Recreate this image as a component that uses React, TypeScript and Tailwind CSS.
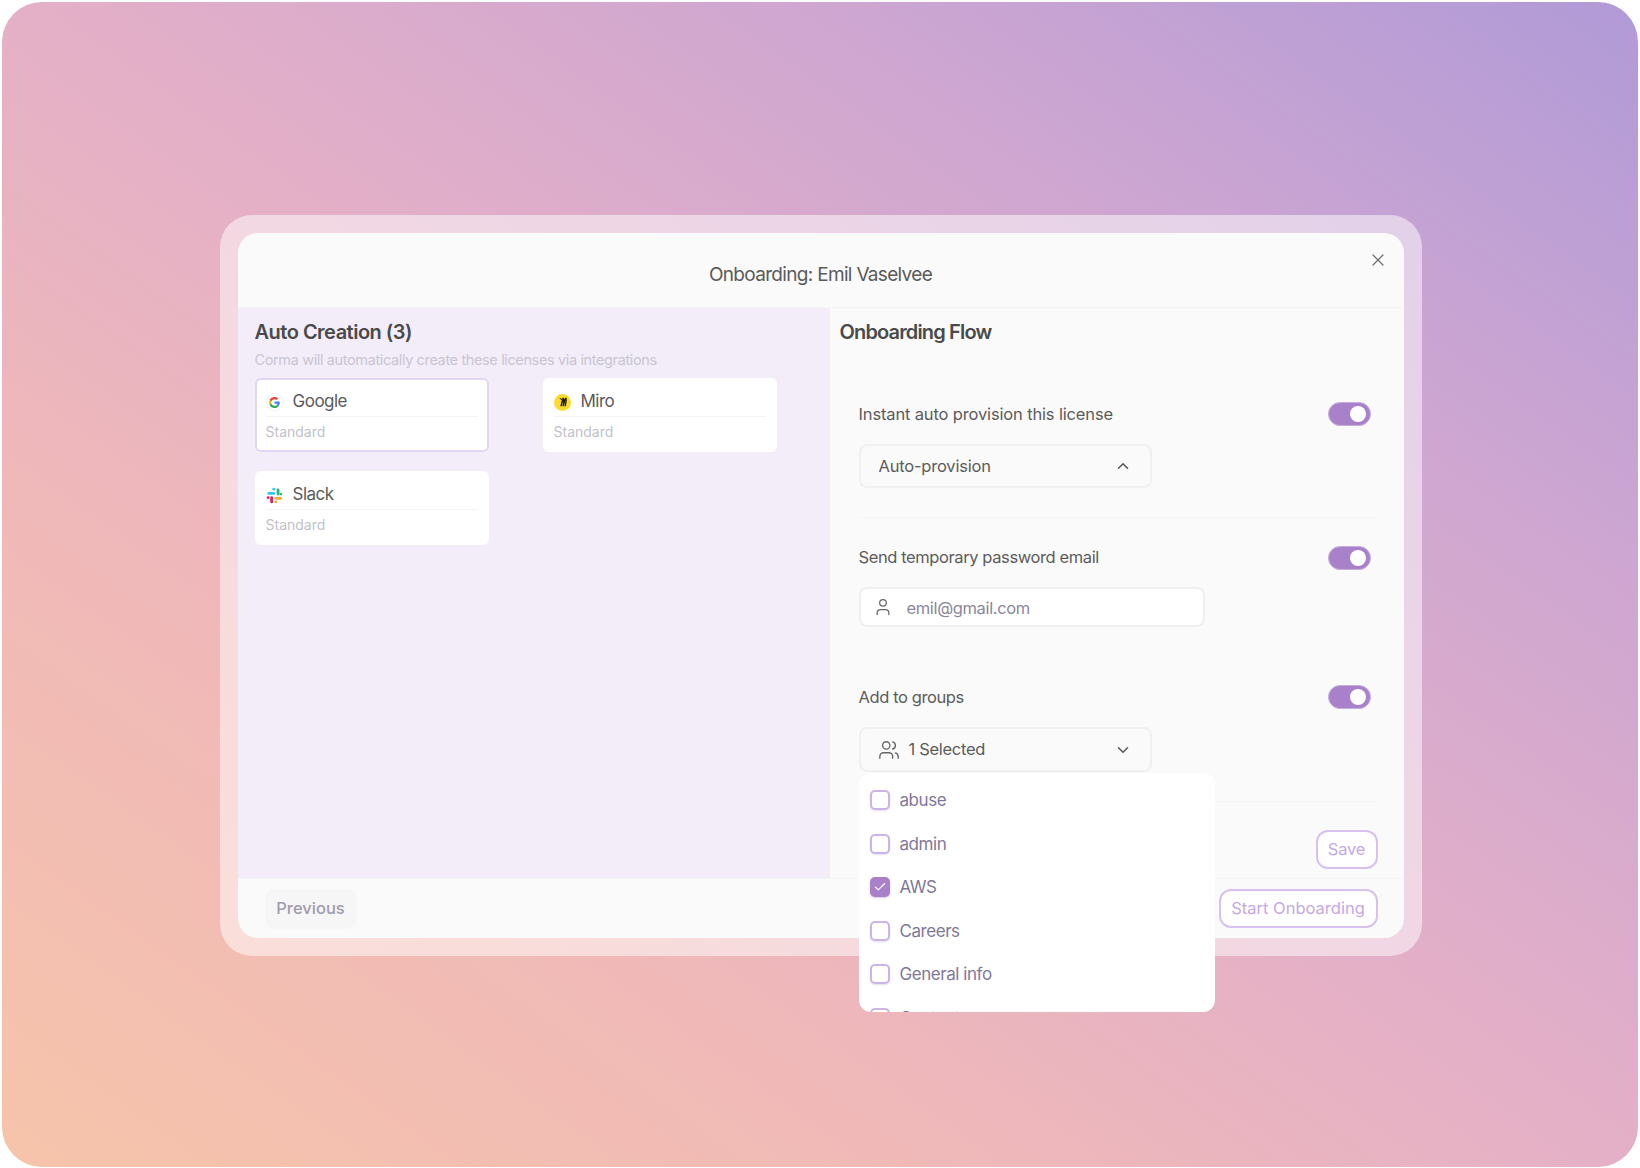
import { Check, ChevronDown, ChevronUp, User, Users, X } from "lucide-react";

function Toggle() {
  return (
    <div className="flex h-[24px] w-[43px] items-center justify-end rounded-full border border-[#c4aede] bg-[#a981cb] pr-[4px]">
      <div className="h-[16px] w-[16px] rounded-full bg-white" />
    </div>
  );
}

function GoogleLogo() {
  return (
    <div className="flex h-[18px] w-[18px] items-center justify-center rounded-full border border-[#f1f1f1] bg-white">
      <svg viewBox="0 0 48 48" className="h-[11px] w-[11px]">
        <path fill="#EA4335" d="M24 9.5c3.5 0 6.7 1.2 9.2 3.6l6.9-6.9C35.9 2.4 30.5 0 24 0 14.6 0 6.5 5.4 2.6 13.2l8 6.2C12.5 13.7 17.8 9.5 24 9.5z" />
        <path fill="#4285F4" d="M47 24.5c0-1.6-.1-3.1-.4-4.5H24v9h13c-.6 3-2.3 5.5-4.800 7.200l7.700 6C44.400 37.600 47 31.600 47 24.500z" />
        <path fill="#FBBC05" d="M10.600 28.600c-.5-1.400-.8-3-.8-4.600s.3-3.200.8-4.600l-8-6.200C.9 16.500 0 20.100 0 24s.9 7.500 2.600 10.800l8-6.200z" />
        <path fill="#34A853" d="M24 48c6.500 0 11.900-2.100 15.900-5.800l-7.700-6c-2.100 1.400-4.900 2.300-8.200 2.300-6.200 0-11.500-4.200-13.400-9.900l-8 6.200C6.500 42.600 14.600 48 24 48z" />
      </svg>
    </div>
  );
}

function SlackLogo() {
  return (
    <svg viewBox="0 0 24 24" className="h-[17px] w-[17px]">
      <g fill="#36C5F0">
        <rect x="9" y="1" width="4" height="4" rx="2" />
        <rect x="2" y="7" width="11" height="4" rx="2" />
      </g>
      <g fill="#2EB67D">
        <rect x="15" y="2" width="4" height="10" rx="2" />
        <rect x="19" y="8" width="4" height="4" rx="2" />
      </g>
      <g fill="#ECB22E">
        <rect x="12" y="14" width="11" height="4" rx="2" />
        <rect x="12" y="19" width="4" height="4" rx="2" />
      </g>
      <g fill="#E01E5A">
        <rect x="6" y="13" width="4" height="10" rx="2" />
        <rect x="1" y="13" width="4" height="4" rx="2" />
      </g>
    </svg>
  );
}

function MiroLogo() {
  return (
    <div className="flex h-[17px] w-[17px] items-center justify-center rounded-full bg-[#fbdc2e]">
      <svg viewBox="0 0 12 12" className="h-[10px] w-[10px]">
        <path fill="#1d1a10" d="M8.500 1H10.500L9 5 11 1v0L9.500 11H7.800L9 4.500 6.800 11H5.300L6.500 4.500 4.300 11H2.800L4.500 4 1.500 1.500H3.500L5.500 3 5 1H6.800L7.500 3z" />
      </svg>
    </div>
  );
}

function AppCard({ name, logo, selected }: { name: string; logo: React.ReactNode; selected?: boolean }) {
  return (
    <div
      className={
        selected
          ? "h-[74px] rounded-[6px] border-2 border-[#e2d7f1] bg-white px-[9px]"
          : "h-[74px] rounded-[6px] border-2 border-white bg-white px-[9px]"
      }
    >
      <div className="flex h-[37px] items-center gap-[9px] border-b border-[#f4f4f4] pt-[8px]">
        <div className="flex w-[18px] justify-center">{logo}</div>
        <span className="text-[17px] tracking-[-0.500px] text-[#5a5a5a]">{name}</span>
      </div>
      <div className="pt-[5px] text-[14px] leading-[20px] text-[#c2bfca]">Standard</div>
    </div>
  );
}

function Row({ label, tracking }: { label: string; tracking: string }) {
  return (
    <div className="flex items-center justify-between pr-[7px]">
      <span className={tracking + " text-[16.500px] text-[#5c5c5c]"}>{label}</span>
      <Toggle />
    </div>
  );
}

function GroupItem({ label, checked }: { label: string; checked?: boolean }) {
  return (
    <div className="flex h-[43.500px] shrink-0 items-center gap-[10px] pl-[11px]">
      <div
        className={
          checked
            ? "flex h-[20px] w-[20px] items-center justify-center rounded-[5px] bg-[#a981cb] shadow-[0_1px_2px_rgba(120,90,170,0.3)]"
            : "h-[20px] w-[20px] rounded-[5px] border-2 border-[#cbb5e6] bg-white shadow-[0_1px_2px_rgba(120,90,170,0.2)]"
        }
      >
        {checked && <Check className="h-[14px] w-[14px] text-white" strokeWidth={2} />}
      </div>
      <span className="pt-[2px] text-[17px] tracking-[-0.450px] text-[#7f7899]">{label}</span>
    </div>
  );
}

export default function App() {
  return (
    <div className="h-[1168px] w-full bg-white pl-[2px] pr-[2px] pt-[2px] font-['Inter',sans-serif]">
      <div className="flex h-[1165px] w-full justify-center rounded-[40px] bg-[linear-gradient(to_top_right,#f6c4aa_0%,#f0b9b8_28%,#e3afc8_52%,#cba5d2_78%,#b09ad7_100%)] pl-[1px] pt-[213px]">
        <div className="h-[741px] w-[1202px] rounded-[32px] bg-white/50 p-[18px]">
          <div className="flex h-[705px] w-[1166px] flex-col rounded-[20px] bg-[#fafafa]">
            <header className="relative flex h-[74px] shrink-0 items-center justify-center pt-[10px]">
              <h1 className="text-[19px] font-normal tracking-[-0.680px] text-[#5a5a5a]">Onboarding: Emil Vaselvee</h1>
              <X className="absolute right-[16px] top-[17px] h-[20px] w-[20px] text-[#6f6f6f]" strokeWidth={1.500} />
            </header>

            <div className="flex h-[572px] shrink-0 border-t border-b border-[#f5f5f5]">
              <section className="h-full w-[592px] shrink-0 bg-[#f3edfa] pl-[17px] pr-[53px] pt-[12px]">
                <h2 className="text-[20px] font-semibold leading-[24px] tracking-[-0.500px] text-[#4a4a4a]">Auto Creation (3)</h2>
                <p className="mb-[7px] mt-[5px] text-[14.500px] leading-[22px] tracking-[-0.370px] text-[#c9c5d2]">
                  Corma will automatically create these licenses via integrations
                </p>
                <div className="grid grid-cols-[234px_234px] gap-x-[54px] gap-y-[19px]">
                  <AppCard name="Google" logo={<GoogleLogo />} selected />
                  <AppCard name="Miro" logo={<MiroLogo />} />
                  <AppCard name="Slack" logo={<SlackLogo />} />
                </div>
              </section>

              <section className="flex-1 pl-[10px] pr-[26px] pt-[12px]">
                <h2 className="text-[20px] font-semibold leading-[24px] tracking-[-0.850px] text-[#4a4a4a]">Onboarding Flow</h2>
                <div className="ml-[19px] mt-[58px]">
                  <Row label="Instant auto provision this license" tracking="tracking-[-0.150px]" />
                  <div className="mt-[17.500px] flex h-[44px] w-[293px] items-center justify-between rounded-[8px] border-2 border-[#f0f0f0] pl-[18px] pr-[18px]">
                    <span className="text-[16.500px] tracking-[-0.200px] text-[#5c5c5c]">Auto-provision</span>
                    <ChevronUp className="h-[18px] w-[18px] text-[#555]" strokeWidth={2} />
                  </div>
                  <div className="mt-[29px] h-px bg-[#f5f5f5]" />
                  <div className="mt-[27px]">
                    <Row label="Send temporary password email" tracking="tracking-[-0.400px]" />
                  </div>
                  <div className="mt-[16.500px] flex h-[40px] w-[346px] items-center gap-[14px] rounded-[8px] border-2 border-[#efefef] bg-white pl-[12px]">
                    <User className="h-[20px] w-[20px] text-[#666]" strokeWidth={1.500} />
                    <span className="pt-[3px] text-[16.500px] tracking-[-0.350px] text-[#8b8799]">emil@gmail.com</span>
                  </div>
                  <div className="mt-[58px]">
                    <Row label="Add to groups" tracking="tracking-[-0.400px]" />
                  </div>
                  <div className="relative mt-[18px] w-[293px]">
                    <div className="flex h-[45px] items-center justify-between rounded-[8px] border-2 border-[#f0f0f0] pl-[17px] pr-[18px]">
                      <div className="flex items-center gap-[9px]">
                        <Users className="h-[22px] w-[22px] text-[#666]" strokeWidth={1.500} />
                        <span className="text-[16.500px] tracking-[-0.300px] text-[#5c5c5c]">1 Selected</span>
                      </div>
                      <ChevronDown className="h-[18px] w-[18px] text-[#555]" strokeWidth={2} />
                    </div>
                    <div className="absolute left-0 top-[46px] z-10 flex h-[238.500px] w-[356px] flex-col overflow-hidden rounded-[12px] bg-white pt-[5px]">
                      <GroupItem label="abuse" />
                      <GroupItem label="admin" />
                      <GroupItem label="AWS" checked />
                      <GroupItem label="Careers" />
                      <GroupItem label="General info" />
                      <GroupItem label="Contact" />
                    </div>
                  </div>
                  <div className="mt-[29px] h-px bg-[#f5f5f5]" />
                  <div className="mt-[28px] flex justify-end">
                    <button className="h-[39px] w-[62px] rounded-[12px] border-2 border-[#d6c2ec] bg-white text-[16.500px] tracking-[-0.200px] text-[#c6a8e4]">Save</button>
                  </div>
                </div>
              </section>
            </div>

            <footer className="flex flex-1 items-center justify-between pl-[27px] pr-[26px]">
              <button className="h-[40px] w-[92px] rounded-[10px] bg-[#f6f6f6] text-[16.500px] font-medium text-[#a09cad]">Previous</button>
              <button className="h-[39px] w-[159px] rounded-[12px] border-2 border-[#d6c2ec] bg-white text-[16.500px] text-[#c6a8e4]">Start Onboarding</button>
            </footer>
          </div>
        </div>
      </div>
    </div>
  );
}
